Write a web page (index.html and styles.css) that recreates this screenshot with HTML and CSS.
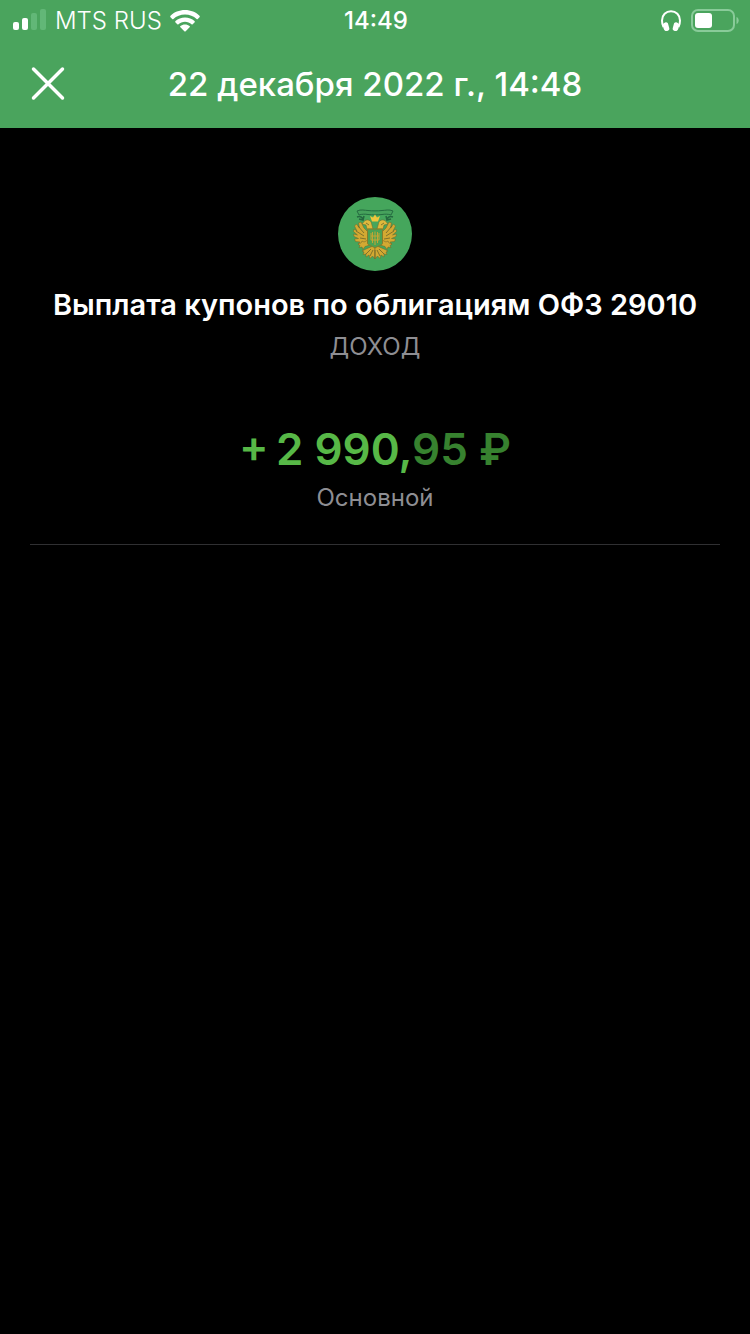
FILE: index.html
```html
<!DOCTYPE html>
<html lang="ru">

<head>
    <meta charset="UTF-8">
    <meta name="viewport" content="width=device-width, initial-scale=1.0">
    <title>Выплата купонов</title>
    <link rel="stylesheet" href="styles.css">
</head>

<body>
    <header class="header">
        <div class="status-bar">
            <div class="status-left">
                <svg class="signal" width="34" height="22" viewBox="0 0 34 22" fill="#fff">
                    <rect x="0" y="12" width="6" height="8" rx="2" />
                    <rect x="9" y="8" width="6" height="12" rx="2" />
                    <rect x="18" y="3" width="6" height="17" rx="2" fill="#62b777" />
                    <rect x="27" y="-1" width="6" height="21" rx="2" fill="#62b777" />
                </svg>
                <span class="carrier">MTS RUS</span>
                <svg class="wifi" width="30" height="22" viewBox="0 0 30 22" fill="#fff">
                    <path d="M15 0C9.200 0 4 2.200 .5 5.700c-.5.500-.5 1 0 1.500l1.700 1.700c.4.400.8.400 1.200 0C6.400 6.100 10.500 4.400 15 4.400s8.600 1.700 11.600 4.500c.4.400.8.400 1.200 0l1.700-1.700c.5-.5.500-1 0-1.500C26 2.200 20.800 0 15 0z" />
                    <path d="M15 7.500c-3.700 0-7 1.400-9.500 3.600-.5.500-.5.900 0 1.400l1.800 1.800c.4.400.8.400 1.200 0 1.700-1.500 4-2.500 6.500-2.500s4.800 1 6.500 2.500c.4.400.8.400 1.200 0l1.800-1.800c.5-.5.500-.9 0-1.400C22 8.900 18.700 7.500 15 7.500z" />
                    <path d="M15 14.500c-1.800 0-3.400.6-4.600 1.600-.5.400-.5.800 0 1.200l3.900 3.900c.5.500.9.500 1.400 0l3.900-3.900c.5-.4.500-.8 0-1.200-1.200-1-2.800-1.600-4.600-1.600z" />
                </svg>
            </div>
            <span class="time">14:49</span>
            <div class="status-right">
                <svg class="headphones" width="20" height="22" viewBox="0 0 20 22">
                    <path d="M2.500 17C1.500 15 1 13 1 10.500 1 5 5 1.200 10 1.200s9 3.800 9 9.300c0 2.500-.5 4.500-1.500 6.500" fill="none" stroke="#fff" stroke-width="2" />
                    <path d="M4.200 12.500c1.500-.6 2.600.2 3 1.700l1.100 4c.3 1.500-.6 2.400-2 2.700-1.800.4-3-.5-3.600-2.200l-.9-3c-.3-1.600.8-2.600 2.400-3.200zM15.800 12.500c-1.500-.6-2.600.2-3 1.700l-1.100 4c-.3 1.500.6 2.400 2 2.700 1.800.4 3-.5 3.600-2.200l.9-3c.3-1.600-.8-2.600-2.400-3.200z" fill="#fff" />
                </svg>
                <svg class="battery" width="48" height="24" viewBox="0 0 48 24">
                    <rect x="1" y="1" width="42" height="21" rx="6" fill="none" stroke="#89cb99" stroke-width="2" />
                    <rect x="4" y="4" width="17" height="15" rx="3" fill="#fff" />
                    <path d="M45.500 8c1.600.7 2.200 1.900 2.200 3.500s-.6 2.800-2.200 3.500z" fill="#89cb99" />
                </svg>
            </div>
        </div>
        <div class="nav-bar">
            <button class="close-btn" type="button" aria-label="Закрыть">
                <svg width="34" height="34" viewBox="0 0 34 34">
                    <path d="M2.500 2l29 29M31.500 2l-29 29" stroke="#fff" stroke-width="3.500" stroke-linecap="round" />
                </svg>
            </button>
            <h1 class="nav-title">22 декабря 2022 г., 14:48</h1>
        </div>
    </header>

    <main class="operation">
        <!-- Coat of arms: two-headed eagle with a ribbon -->
        <svg class="logo" width="74" height="74" viewBox="0 0 74 74">
            <circle cx="37" cy="37" r="37" fill="#45a65c" />
            <g id="half" fill="#d3a932" stroke="#6b642a" stroke-width=".5" stroke-linejoin="round">
                <!-- wing -->
                <path d="M30 35l-4-4-3-6-2.500 1 1 5-3-4-2 2 2.500 5-3-2-.5 2.500 4 3.500-4-1 .5 2.500 4.500 2-4 .5 1 2.500 4.500.5-2 2 3 1 3-2 4-2z" />
                <!-- head and neck -->
                <path d="M24 27l3-3.500c3-1.500 6 0 6.500 3l1.500 5.500h-6l-1-4z" fill="#dfb93c" />
                <!-- leg -->
                <path d="M30 43l-4 2-2-1-1 2-3 1 2 1.500-1 2 3-.5 1 2.500 2-3 5-1.500z" />
                <!-- tail -->
                <path d="M35 49l-7 3-4 2 2 1-1 2.500 3-.5v3l3-2 1 3.500 2.500-2.500 2.500 3V50z" />
            </g>
            <use href="#half" transform="matrix(-1 0 0 1 74 0)" />
            <path d="M20 29l6 7M18 34l8 5M54 29l-6 7M56 34l-8 5M28 57l5-5M32 59l3-6M46 57l-5-5M42 59l-3-6M37 61v-8M22 41l6 1M52 41l-6 1M28 26l3 2M46 26l-3 2" fill="none" stroke="#6b642a" stroke-width=".8" />
            <!-- shield -->
            <path d="M29.500 32h15v14c0 2.500-4 2.500-7.500 5-3.500-2.500-7.500-2.500-7.500-5z" fill="#4ba252" stroke="#897b29" stroke-width="1" />
            <path d="M33 36v7h8v-7M37 34.500V48M34.500 35v11M39.500 35v11M33 39h8" fill="none" stroke="#c3a534" stroke-width="1" />
            <!-- ribbon -->
            <path d="M19 14c4-2 8-.5 11-.5 4 .5 10 .5 14 0 3 0 7-1.500 11 .5l-2 4c-3-1-6-1-9-.5-4 .5-10 .5-14 0-3-.5-6-.5-9 .5z" fill="#46a15c" stroke="#246b40" />
            <path d="M19 20c3-1 6 0 6 3l-4-1M55 20c-3-1-6 0-6 3l4-1M26 19l-1 4M48 19l1 4" fill="none" stroke="#24683f" stroke-width="1.500" />
            <!-- crown -->
            <path d="M34 24.500l-2-5.500 3 1.500 2-3 2 3 3-1.500-2 5.500z" fill="#efc63c" />
        </svg>
        <h2 class="title">Выплата купонов по облигациям ОФЗ 29010</h2>
        <p class="category">ДОХОД</p>
        <p class="amount">+&thinsp;2 990,<span class="cents">95 ₽</span></p>
        <p class="account">Основной</p>
    </main>
</body>

</html>
```
FILE: styles.css
```css
body {
    font-family: Inter, "Liberation Sans", sans-serif;
    margin: 0;
    min-height: 100vh;
    background-color: #000;
    color: #fff;
}

h1,
h2,
p {
    margin: 0;
}

svg {
    display: block;
    flex-shrink: 0;
    overflow: visible;
}

.header {
    background-color: #4aa45d;
}

/* Status bar */
.status-bar {
    display: grid;
    grid-template-columns: 1fr auto 1fr;
    align-items: center;
    height: 40px;
    padding: 0 11px 0 13px;
    font-size: 24px;
    line-height: 42px;
}

.status-left,
.status-right {
    display: flex;
    align-items: center;
    gap: 8px;
}

.status-right {
    justify-content: flex-end;
    gap: 10px;
}

.carrier {
    font-weight: 300;
}

.time {
    font-weight: 500;
}

/* Navigation bar */
.nav-bar {
    display: grid;
    grid-template-columns: 34px 1fr 34px;
    align-items: center;
    height: 88px;
    padding: 0 31px;
}

.close-btn {
    padding: 0;
    border: none;
    background: none;
    cursor: pointer;
}

.nav-title {
    font-size: 33px;
    font-weight: 500;
    line-height: 40px;
    text-align: center;
}

/* Operation details */
.operation {
    display: flex;
    flex-direction: column;
    align-items: center;
    margin: 0 30px;
    padding: 69px 0 30px;
    border-bottom: 1px solid #303032;
    text-align: center;
}

.title {
    margin-top: 16px;
    font-size: 29px;
    font-weight: 600;
    line-height: 36px;
}

.category {
    margin-top: 8px;
    color: #8e8e93;
    font-size: 24px;
    line-height: 32px;
}

.amount {
    margin-top: 58px;
    color: #57b847;
    font-size: 44px;
    font-weight: 600;
    line-height: 56px;
}

.cents {
    color: #37822f;
}

.account {
    margin-top: 5px;
    color: #8e8e93;
    font-size: 24px;
    line-height: 32px;
}
```
